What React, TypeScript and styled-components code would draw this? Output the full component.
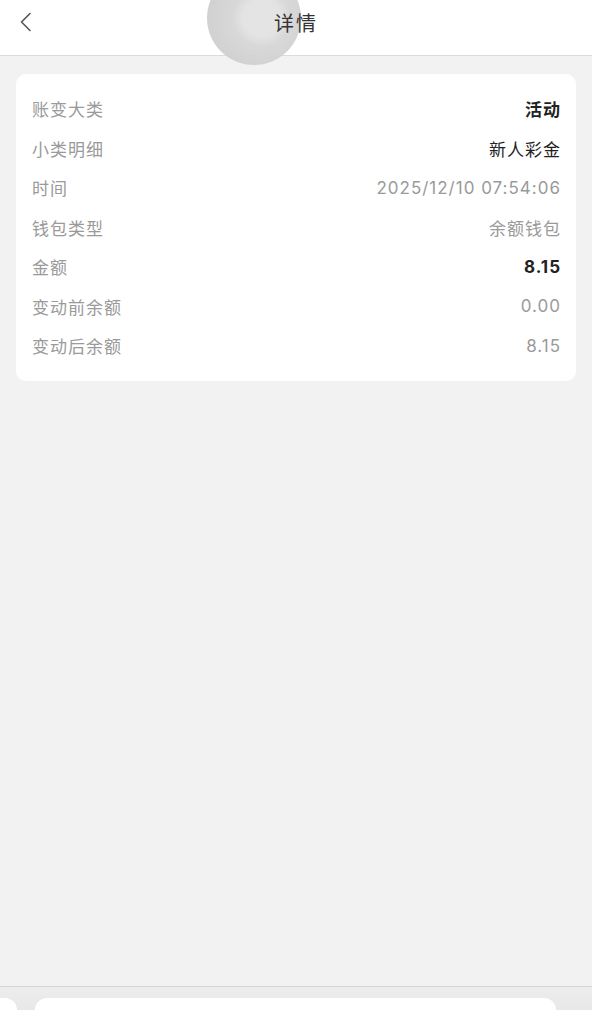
import React from "react";
import styled, { createGlobalStyle } from "styled-components";

const GlobalStyle = createGlobalStyle`
  html, body {
    margin: 0;
    padding: 0;
    background: #f2f2f2;
    font-family: Inter, "Noto Sans CJK SC", sans-serif;
  }
`;

const Page = styled.div`
  height: 100vh;
  display: flex;
  flex-direction: column;
  background: #f2f2f2;
  overflow: hidden;
`;

const Header = styled.div`
  position: relative;
  height: 55px;
  flex-shrink: 0;
  background: #fff;
  border-bottom: 1px solid #dcdcdc;
  display: flex;
  align-items: center;
  justify-content: center;
`;

const BackButton = styled.button`
  position: absolute;
  left: 14px;
  top: 10px;
  width: 24px;
  height: 24px;
  padding: 0;
  border: none;
  background: none;
  display: flex;
  align-items: center;
  justify-content: center;
`;

const Title = styled.h1`
  position: relative;
  z-index: 2;
  margin: 0 0 11px;
  font-size: 20px;
  font-weight: 400;
  color: #333;
  letter-spacing: 2px;
`;

const Ripple = styled.div`
  position: absolute;
  z-index: 1;
  left: 207px;
  top: -29px;
  width: 94px;
  height: 94px;
  border-radius: 50%;
  background: radial-gradient(circle at 58% 50%, #e2e2e2 0 26%, #d6d6d6 40%, #c9c9c9 100%);
  opacity: 0.95;
  pointer-events: none;
`;

const Content = styled.div`
  flex: 1;
  padding: 18px 16px 0;
`;

const Card = styled.div`
  background: #fff;
  border-radius: 10px;
  padding: 15px 16px 15px;
`;

const Row = styled.div`
  height: 39.5px;
  display: flex;
  align-items: center;
  justify-content: space-between;
  font-size: 17px;
`;

const Label = styled.span`
  color: #9a9a9a;
  letter-spacing: 1px;
`;

const Value = styled.span<{ $strong?: boolean; $dark?: boolean }>`
  color: ${(p) => (p.$strong || p.$dark ? "#222" : "#9a9a9a")};
  font-weight: ${(p) => (p.$strong ? 700 : 400)};
  letter-spacing: 1px;
  margin-right: -1px;
`;

const Footer = styled.div`
  height: 23px;
  flex-shrink: 0;
  border-top: 1px solid #d6d6d6;
  background: linear-gradient(#ededed, #e8e8e8);
  display: flex;
  align-items: flex-end;
  gap: 18px;
  padding-right: 36px;
`;

const SideTab = styled.div`
  width: 17px;
  height: 12px;
  background: #fff;
  border-top-right-radius: 12px;
`;

const Sheet = styled.div`
  flex: 1;
  height: 12px;
  background: #fff;
  border-radius: 14px 14px 0 0;
`;

const rows = [
  { label: "账变大类", value: "活动", strong: true },
  { label: "小类明细", value: "新人彩金", dark: true },
  { label: "时间", value: "2025/12/10 07:54:06" },
  { label: "钱包类型", value: "余额钱包" },
  { label: "金额", value: "8.15", strong: true },
  { label: "变动前余额", value: "0.00" },
  { label: "变动后余额", value: "8.15" },
];

export default function App() {
  return (
    <Page>
      <GlobalStyle />
      <Header>
        <BackButton>
          <svg width="14" height="20" viewBox="0 0 14 20" fill="none">
            <path d="M11 1.5L2.5 10l8.5 8.5" stroke="#555" strokeWidth="1.6" strokeLinecap="round" strokeLinejoin="round" />
          </svg>
        </BackButton>
        <Title>详情</Title>
        <Ripple />
      </Header>
      <Content>
        <Card>
          {rows.map((r) => (
            <Row key={r.label}>
              <Label>{r.label}</Label>
              <Value $strong={r.strong} $dark={r.dark}>
                {r.value}
              </Value>
            </Row>
          ))}
        </Card>
      </Content>
      <Footer>
        <SideTab />
        <Sheet />
      </Footer>
    </Page>
  );
}
